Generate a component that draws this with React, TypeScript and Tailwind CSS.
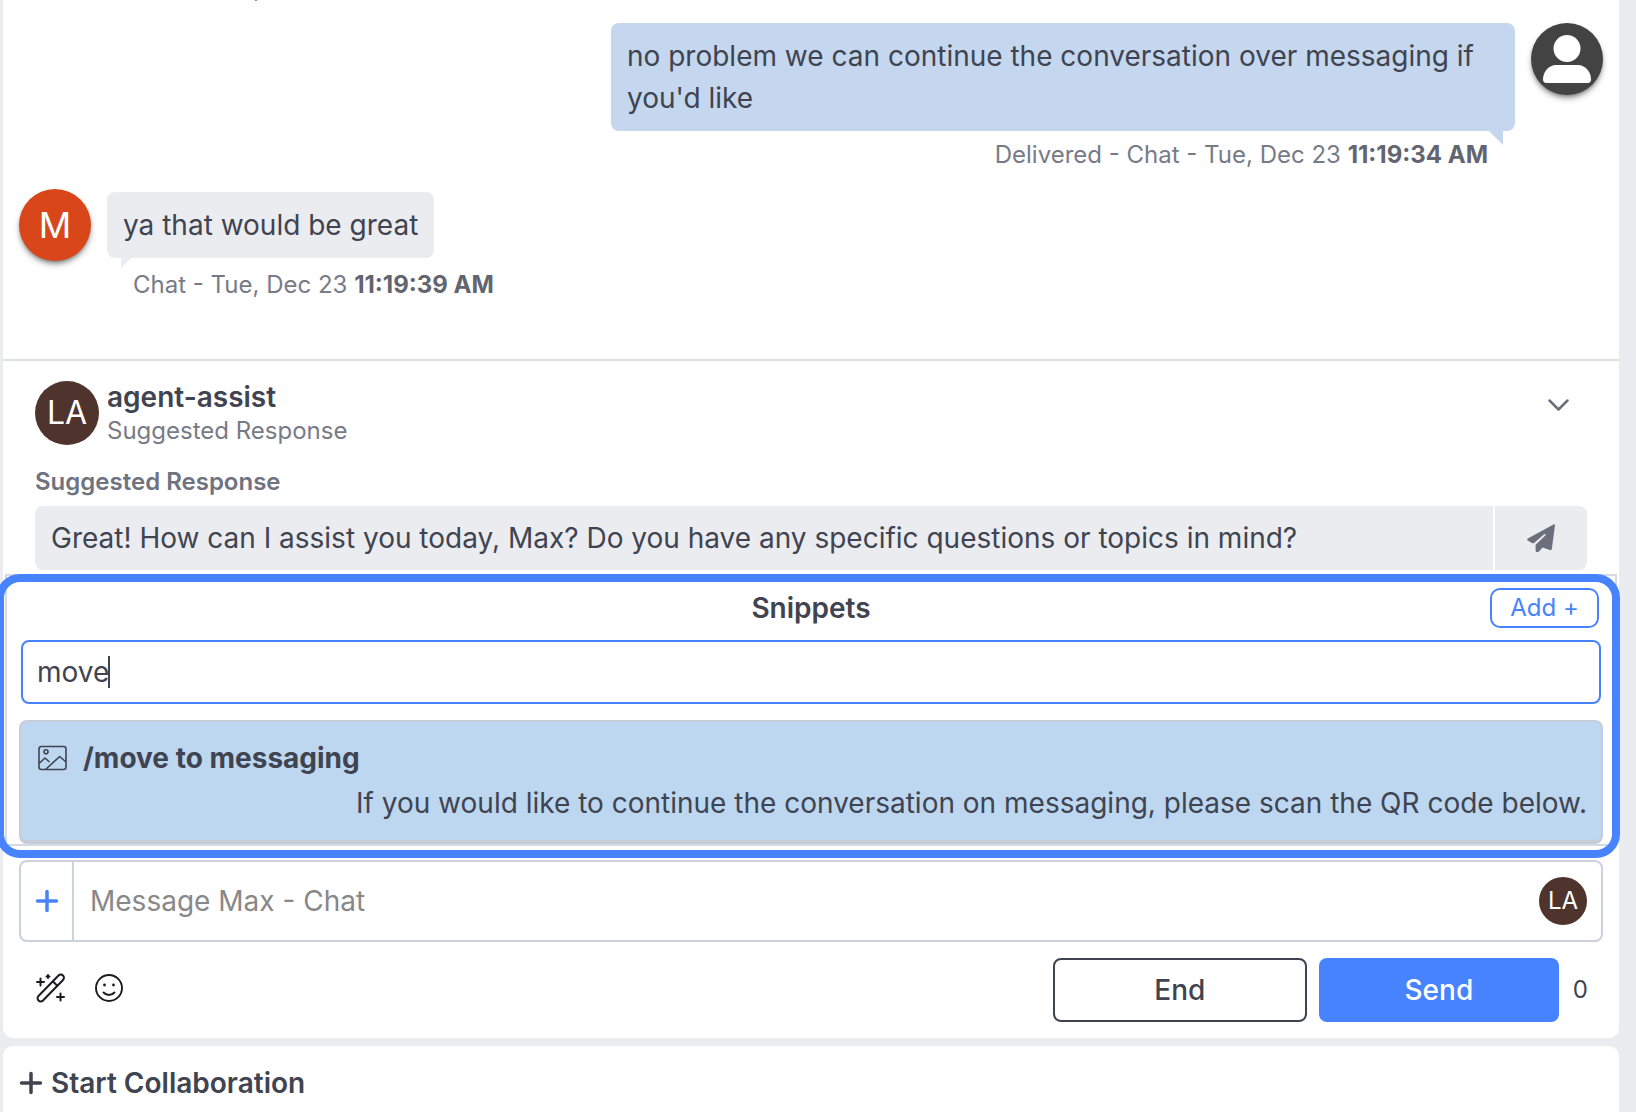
import { useState } from "react";
import type { ReactNode } from "react";

const suggestion = "Great! How can I assist you today, Max? Do you have any specific questions or topics in mind?";

const snippets = [
  {
    name: "/move to messaging",
    text: "If you would like to continue the conversation on messaging, please scan the QR code below.",
  },
];

const PersonIcon = () => (
  <svg className="w-[72px] h-[72px]" viewBox="0 0 72 72" fill="#fff">
    <circle cx="36" cy="25.500" r="13.500" />
    <path d="M25 42h22c7 0 13 6.500 13 14.500 0 2-1.300 3.500-3.200 3.500H15.200C13.300 60 12 58.500 12 56.500 12 48.500 18 42 25 42z" />
  </svg>
);

const ChevronDownIcon = () => (
  <svg className="w-6 h-6" viewBox="0 0 24 24" fill="none" stroke="#6b6f7b" strokeWidth="2.5" strokeLinecap="round" strokeLinejoin="round">
    <path d="M2.500 7.500l9 9 9-9" />
  </svg>
);

const PlaneIcon = () => (
  <svg className="w-7 h-7" viewBox="0 0 28 28" fill="#6b6f7b">
    <path d="M26.500.4Q28-.2 28 1.200L24.900 24.600Q24.600 26.600 22.800 26L15.600 23.600 12 27.400Q9 29 8.600 26.400V20.800L18.600 11.200Q19 9.600 17.200 10.200L7 19Q6 19.600 5 19L.8 16.600Q-.6 15.400.8 14.400z" />
  </svg>
);

const ImageIcon = () => (
  <svg className="w-8 h-8" viewBox="0 0 32 32" fill="none" stroke="#404450" strokeWidth="1.6" strokeLinejoin="round">
    <rect x="4" y="4.500" width="27" height="23" rx="2.500" />
    <circle cx="11" cy="9.800" r="2" />
    <path d="M4 21.500l6-5.500 4.500 4M10.500 27.500L24.700 14.500 31 20" />
  </svg>
);

const WandIcon = () => (
  <svg className="w-8 h-8" viewBox="0 0 32 32" fill="none" stroke="#1c1c1e" strokeWidth="2" strokeLinecap="round" strokeLinejoin="round">
    <path d="M23.500 3.500a3 3 0 0 1 4.500 4.500L8 28.500A3 3 0 0 1 3.500 24zM18 9.500l4.500 4.500M2 10h7M5.500 6.500v7M11.500 4.500h3M13 3v3M22 25h7M25.500 21.500v7" />
  </svg>
);

const SmileIcon = () => (
  <svg className="w-8 h-8" viewBox="0 0 32 32" fill="none" stroke="#1c1c1e" strokeWidth="1.9" strokeLinecap="round">
    <circle cx="16" cy="16" r="13" />
    <path d="M10.500 20.500c3 3.300 8 3.300 11 0" />
    <circle cx="11.500" cy="13" r="1.400" fill="#1c1c1e" stroke="none" />
    <circle cx="20.500" cy="13" r="1.400" fill="#1c1c1e" stroke="none" />
  </svg>
);

const PlusIcon = () => (
  <svg className="w-6 h-6 shrink-0" viewBox="0 0 24 24" fill="none" stroke="currentColor" strokeWidth="3.5" strokeLinecap="round">
    <path d="M12 2.500v19M2.500 12h19" />
  </svg>
);

const Meta = ({ label, time }: { label: string; time?: string }) => (
  <p className="text-[24px] leading-9 text-[#777b87]">
    {label} {time && <span className="font-bold text-[#62656f]">{time}</span>}
  </p>
);

const Avatar = ({ className, children }: { className: string; children: ReactNode }) => (
  <div className={`flex shrink-0 items-center justify-center rounded-full text-white ${className}`}>{children}</div>
);

function Thread() {
  return (
    <div className="flex flex-col flex-1 min-h-0 justify-end overflow-hidden px-4 pb-14">
      <div className="pl-[115px] pb-4">
        <Meta label="Chat - Tue, Dec 23" />
      </div>
      <div className="flex justify-end gap-4">
        <div className="flex flex-col items-end">
          <div className="relative w-[904px] rounded-lg bg-[#c4d7ef] px-4 py-3">
            <p className="text-[28px] leading-[42px]">
              no problem we can continue the conversation over messaging if you'd like
            </p>
            <svg className="absolute top-full right-3 w-3.5 h-3.5" viewBox="0 0 14 14" fill="#c4d7ef">
              <path d="M0 0h14v14z" />
            </svg>
          </div>
          <div className="pt-1.5 pr-[27px]">
            <Meta label="Delivered - Chat - Tue, Dec 23" time="11:19:34 AM" />
          </div>
        </div>
        <Avatar className="w-[72px] h-[72px] bg-[#434343] shadow-md shadow-black/40">
          <PersonIcon />
        </Avatar>
      </div>
      <div className="flex items-start gap-4 pt-4">
        <Avatar className="w-[72px] h-[72px] bg-[#d9461a] text-[36px] shadow-md shadow-black/40">M</Avatar>
        <div className="pt-[3px]">
          <div className="relative w-fit rounded-lg bg-[#ebecf0] px-4 py-3">
            <p className="text-[28px] leading-[42px]">ya that would be great</p>
            <svg className="absolute top-full left-3.5 w-2.5 h-2.5" viewBox="0 0 10 10" fill="#ebecf0">
              <path d="M0 0h10L0 10z" />
            </svg>
          </div>
          <div className="pt-[9px] pl-[26px]">
            <Meta label="Chat - Tue, Dec 23" time="11:19:39 AM" />
          </div>
        </div>
      </div>
    </div>
  );
}

function AgentAssist() {
  return (
    <section className="border-t-2 border-[#dce0e6] px-8 pt-5 pb-1">
      <div className="flex gap-2">
        <Avatar className="w-16 h-16 bg-[#4f342e] text-[32px]">LA</Avatar>
        <div className="flex-1">
          <h2 className="text-[28px] leading-8 font-semibold">agent-assist</h2>
          <p className="text-[24px] leading-9 text-[#777b87]">Suggested Response</p>
        </div>
        <button aria-label="Collapse" className="mr-4 self-start pt-3">
          <ChevronDownIcon />
        </button>
      </div>
      <h3 className="pt-[15px] pb-1.5 text-[24px] leading-9 font-semibold text-[#6f7380]">Suggested Response</h3>
      <div className="flex h-16 gap-0.5 text-[28px]">
        <p className="flex flex-1 items-center rounded-l-lg bg-[#ebecf0] pl-4">{suggestion}</p>
        <button aria-label="Send suggestion" className="flex w-[92px] items-center justify-center rounded-r-lg bg-[#ebecf0]">
          <PlaneIcon />
        </button>
      </div>
    </section>
  );
}

function Snippets() {
  const [query, setQuery] = useState("move");

  return (
    <section className="relative mx-0.5 border-2 border-[#d5d9e3] px-3 pt-3">
      <div className="absolute -inset-x-[11px] -top-0.5 -bottom-3.5 mr-1.5 rounded-[24px] border-8 border-[#4883ff] pointer-events-none" />
      <div className="grid grid-cols-[1fr_auto_1fr] items-center px-1 pb-3">
        <h2 className="col-start-2 text-[28px] leading-10 font-semibold">Snippets</h2>
        <button className="h-10 w-[109px] justify-self-end rounded-[10px] border-2 border-[#4883ff] text-[24px] leading-8 text-[#4883ff]">
          Add +
        </button>
      </div>
      <div className="relative px-0.5">
        <input
          aria-label="Search snippets"
          className="block h-16 w-full rounded-lg border-2 border-[#4883ff] px-3.5 text-[28px] caret-transparent outline-none"
          value={query}
          onChange={(e) => setQuery(e.target.value)}
        />
        {query === "move" && <span className="absolute left-[89px] top-4 h-8 w-0.5 bg-[#404450]" />}
      </div>
      {snippets.map((s) => (
        <button key={s.name} className="mt-4 block w-full rounded-lg border-2 border-b-4 border-[#c7ccd8] bg-[#bdd7f1] px-3.5 pt-3 pb-4 text-[28px]">
          <span className="flex items-center gap-4 font-bold leading-[48px]">
            <ImageIcon />
            {s.name}
          </span>
          <span className="block text-right leading-[42px]">{s.text}</span>
        </button>
      ))}
    </section>
  );
}

function Composer() {
  return (
    <section className="px-4 pt-3.5 pb-4">
      <div className="flex h-[82px] items-center rounded-lg border-2 border-[#cdd0de] pr-3.5">
        <button aria-label="Add attachment" className="flex h-full w-[53px] items-center justify-center border-r-2 border-[#cdd0de] text-[#4883ff]">
          <PlusIcon />
        </button>
        <input
          aria-label="Message"
          placeholder="Message Max - Chat"
          className="min-w-0 flex-1 px-4 text-[28px] placeholder:text-[#888] outline-none"
        />
        <Avatar className="w-12 h-12 bg-[#4f342e] text-[24px]">LA</Avatar>
      </div>
      <div className="flex items-center pt-4">
        <div className="flex flex-1 items-center gap-[26px] pl-4 pb-1">
          <button aria-label="Rewrite">
            <WandIcon />
          </button>
          <button aria-label="Emoji">
            <SmileIcon />
          </button>
        </div>
        <button className="mr-3 h-16 w-[254px] rounded-lg border-2 border-[#404450] text-[28px] font-medium">End</button>
        <button className="h-16 w-[240px] rounded-lg bg-[#4883ff] text-[28px] font-medium text-white">Send</button>
        <span className="pl-3.5 pr-[15px] text-[24px]">0</span>
      </div>
    </section>
  );
}

export default function App() {
  return (
    <div className="flex flex-col h-screen gap-2 overflow-hidden bg-[#ebecf0] pl-[3px] pr-[17px] font-['Inter',sans-serif] text-[#404450]">
      <main className="flex flex-col flex-1 min-h-0 rounded-b-[10px] bg-white">
        <Thread />
        <AgentAssist />
        <Snippets />
        <Composer />
      </main>
      <footer className="rounded-t-[10px] bg-white px-4 pt-4 pb-2">
        <button className="flex h-[42px] items-center gap-2 text-[28px] font-semibold">
          <PlusIcon />
          Start Collaboration
        </button>
      </footer>
    </div>
  );
}
